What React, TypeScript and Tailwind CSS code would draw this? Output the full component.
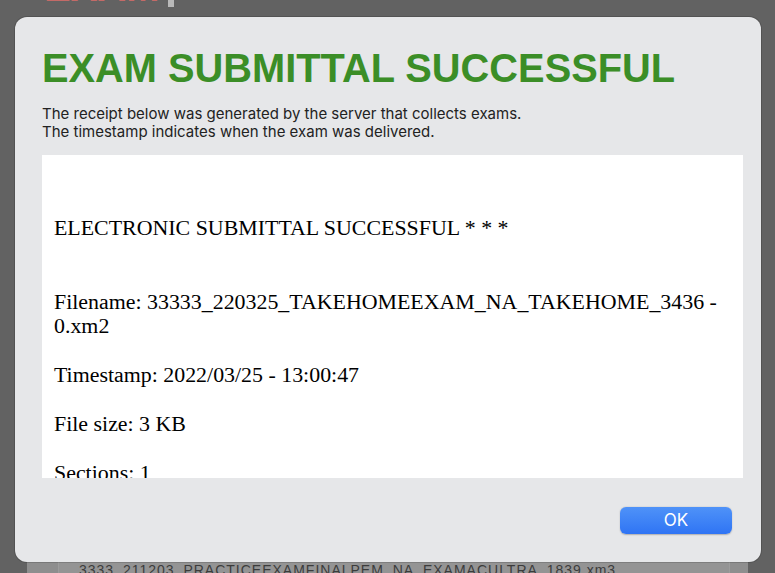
import React from 'react'

const receiptLines = [
  '',
  '',
  'ELECTRONIC SUBMITTAL SUCCESSFUL * * *',
  '',
  '',
  'Filename: 33333_220325_TAKEHOMEEXAM_NA_TAKEHOME_3436 -',
  '0.xm2',
  '',
  'Timestamp: 2022/03/25 - 13:00:47',
  '',
  'File size: 3 KB',
  '',
  'Sections: 1',
  '',
  'Answers: 12',
]

export default function App() {
  return (
    <div className="relative w-[775px] h-[573px] overflow-hidden bg-[#626262] font-['Liberation_Sans',sans-serif]">
      {/* page behind the sheet */}
      <div className="flex flex-col h-full">
        <div className="flex items-end gap-[8px] pl-[44px] -mt-[29px] h-[36px]">
          <span className="text-[40px] leading-[40px] font-bold text-[#c46a67]">EXAM</span>
          <span className="w-[6px] h-[12px] bg-[#b9b9b9]"></span>
        </div>
        <div className="mt-auto mx-[27px] h-[40px] bg-[#8e8e8e] pl-[31px] pr-[18px] pt-[22px]">
          <div className="h-[24px] border border-[#9c9c9c] bg-[#949494] pl-[20px] pt-[6px] text-[14px] leading-[16px] tracking-[1px] text-[#3c3c3c]">
            3333_211203_PRACTICEEXAMFINALPEM_NA_EXAMACULTRA_1839.xm3
          </div>
        </div>
      </div>

      {/* sheet */}
      <div className="absolute left-[15px] top-[17px] w-[746px] h-[545px] rounded-[12px] bg-[#e6e7e9] shadow-[0_0_0_1px_rgba(0,0,0,0.15)] flex flex-col pt-[31px] pl-[27px] pr-[18px]">
        <h1 className="text-[39.8px] leading-[40px] font-bold text-[#3b8e27]">EXAM SUBMITTAL SUCCESSFUL</h1>
        <div className="mt-[17px] text-[15px] leading-[18px] text-[#222] font-['Inter',sans-serif]">
          <p>The receipt below was generated by the server that collects exams.</p>
          <p>The timestamp indicates when the exam was delivered.</p>
        </div>
        <div className="mt-[14px] h-[323px] bg-white overflow-hidden pt-[12px] px-[12px] font-['Liberation_Serif',serif] text-[21.9px] leading-[24.5px] text-black">
          {receiptLines.map((line, i) => (
            <div key={i} className="h-[24.5px] whitespace-nowrap">{line}</div>
          ))}
        </div>
        <div className="flex justify-end mt-[29px] mr-[11px]">
          <button className="w-[112px] h-[27px] rounded-[6px] bg-gradient-to-b from-[#4f92f8] to-[#2f74f4] shadow-[0_0.5px_1.5px_rgba(0,0,0,0.25)] text-white text-[17px] font-['Inter',sans-serif] leading-[27px]">
            OK
          </button>
        </div>
      </div>
    </div>
  )
}
